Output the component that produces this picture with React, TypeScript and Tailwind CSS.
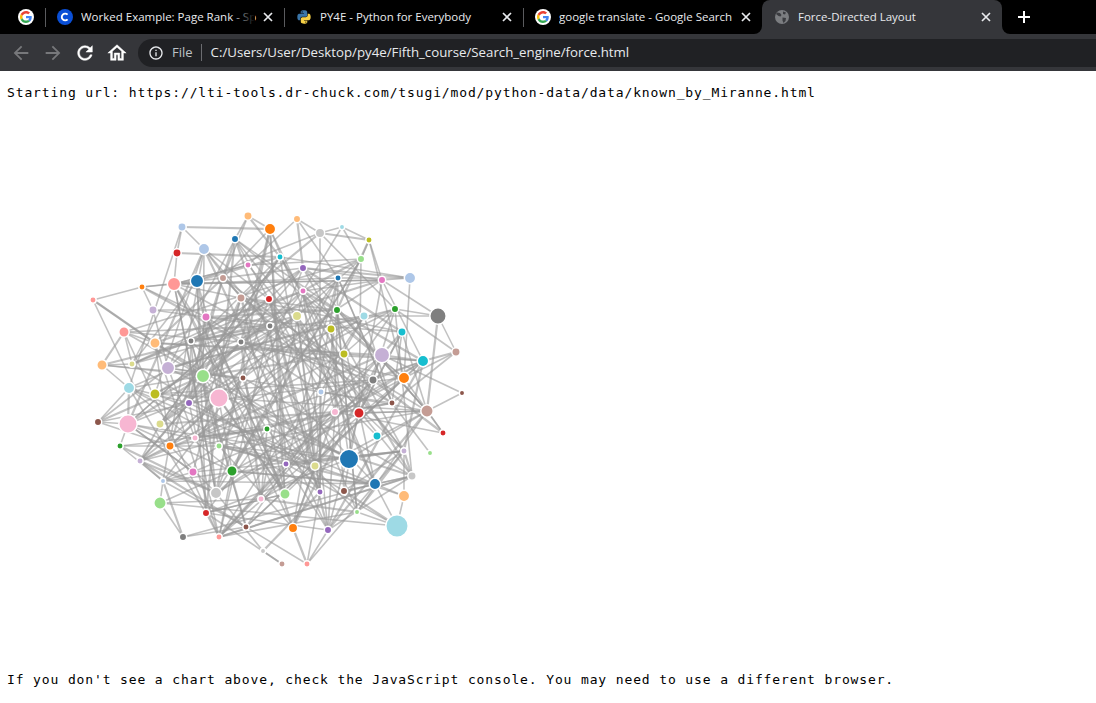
import { ReactNode } from "react";

type Node = [number, number, number, string];

const nodes: Node[] = [
  [248, 216, 3.5, "#ffbb78"], [270, 229, 5, "#ff7f0e"], [182, 227, 3.5, "#aec7e8"], [235, 239, 3, "#1f77b4"],
  [204, 249, 5, "#aec7e8"], [177, 253, 3.5, "#d62728"], [280, 257, 2.5, "#17becf"], [248, 265, 2.5, "#e377c2"],
  [223, 278, 3, "#c49c94"], [197, 281, 6, "#1f77b4"], [174, 284, 6, "#ff9896"], [142, 287, 2.5, "#ff7f0e"],
  [93, 300, 2.5, "#ff9896"], [241, 298, 3.5, "#c49c94"], [269, 299, 3, "#d62728"], [153, 310, 3.5, "#c5b0d5"],
  [206, 317, 3.5, "#e377c2"], [124, 332, 4.5, "#ff9896"], [155, 343, 4.5, "#ffbb78"], [191, 341, 2.5, "#7f7f7f"],
  [241, 342, 2.5, "#7f7f7f"], [270, 326, 2.5, "#7f7f7f"], [102, 365, 4.5, "#ffbb78"], [132, 364, 2.5, "#dbdb8d"],
  [168, 368, 6, "#c5b0d5"], [203, 376, 6, "#98df8a"], [243, 378, 2.5, "#8c564b"], [129, 388, 5, "#9edae5"],
  [155, 394, 4.5, "#bcbd22"], [297, 219, 3, "#ffbb78"], [320, 233, 4, "#c7c7c7"], [342, 227, 2, "#9edae5"],
  [369, 240, 2.5, "#bcbd22"], [361, 259, 3, "#98df8a"], [303, 268, 3, "#9467bd"], [338, 278, 2.5, "#1f77b4"],
  [382, 280, 3, "#e377c2"], [410, 278, 5, "#aec7e8"], [303, 291, 2.5, "#e377c2"], [395, 309, 3, "#2ca02c"],
  [337, 310, 3, "#2ca02c"], [297, 316, 4, "#dbdb8d"], [364, 316, 3.5, "#9edae5"], [438, 316, 7.5, "#7f7f7f"],
  [402, 332, 3.5, "#17becf"], [331, 329, 3.5, "#bcbd22"], [344, 354, 3.5, "#bcbd22"], [382, 355, 7, "#c5b0d5"],
  [423, 361, 5, "#17becf"], [456, 352, 3.5, "#c49c94"], [373, 380, 3.5, "#7f7f7f"], [404, 378, 5, "#ff7f0e"],
  [321, 392, 2.5, "#aec7e8"], [462, 393, 2, "#8c564b"], [189, 403, 3, "#9467bd"], [219, 398, 8.5, "#f7b6d2"],
  [98, 422, 3, "#8c564b"], [128, 424, 8.5, "#f7b6d2"], [160, 424, 3.5, "#dbdb8d"], [267, 429, 2.5, "#2ca02c"],
  [195, 438, 2.5, "#f7b6d2"], [120, 446, 2.5, "#2ca02c"], [170, 446, 3.5, "#ff7f0e"], [219, 446, 2.5, "#98df8a"],
  [140, 461, 2.5, "#c5b0d5"], [193, 472, 3.5, "#e377c2"], [232, 471, 4.5, "#2ca02c"], [163, 481, 2, "#aec7e8"],
  [216, 493, 5, "#c7c7c7"], [160, 503, 5.5, "#98df8a"], [261, 499, 2.5, "#f7b6d2"], [206, 513, 3, "#d62728"],
  [246, 527, 2.5, "#8c564b"], [183, 537, 3, "#7f7f7f"], [219, 537, 2.5, "#ff9896"], [263, 551, 2, "#c7c7c7"],
  [392, 403, 2.5, "#8c564b"], [335, 412, 3, "#f7b6d2"], [359, 413, 4.5, "#d62728"], [427, 411, 5.5, "#c49c94"],
  [443, 433, 2.5, "#d62728"], [377, 436, 3.5, "#17becf"], [404, 451, 2.5, "#c5b0d5"], [430, 453, 2, "#98df8a"],
  [349, 459, 9, "#1f77b4"], [286, 464, 2.5, "#9467bd"], [315, 466, 3.5, "#dbdb8d"], [412, 476, 3.5, "#c7c7c7"],
  [375, 484, 5, "#1f77b4"], [344, 491, 3, "#8c564b"], [320, 492, 2.5, "#9467bd"], [285, 494, 4.5, "#98df8a"],
  [404, 496, 5, "#ffbb78"], [357, 512, 2, "#98df8a"], [397, 526, 10.5, "#9edae5"], [293, 528, 4, "#ff7f0e"],
  [328, 530, 3, "#9467bd"], [282, 564, 2.5, "#c49c94"], [307, 564, 2.5, "#ff9896"],
];

// the edges that can be read on the outside of the graph
const outerEdges: number[][] = [
  [182, 227, 270, 229], [182, 227, 204, 249], [182, 227, 177, 253], [182, 227, 129, 388], [177, 253, 174, 284],
  [177, 253, 280, 257], [174, 284, 142, 287], [142, 287, 93, 300], [93, 300, 155, 343], [93, 300, 137, 392],
  [93, 300, 203, 376], [142, 287, 197, 281], [174, 284, 248, 265], [142, 287, 153, 310], [153, 310, 168, 368],
  [142, 287, 241, 342], [142, 287, 206, 317], [248, 216, 235, 239], [248, 216, 270, 229], [248, 216, 223, 278],
  [248, 216, 280, 257], [124, 332, 155, 343], [124, 332, 132, 364], [124, 332, 241, 342], [124, 332, 270, 326],
  [102, 365, 124, 332], [102, 365, 132, 364], [102, 365, 129, 388], [102, 365, 243, 378], [102, 365, 203, 376],
  [102, 365, 297, 316], [204, 249, 203, 376], [204, 249, 241, 298], [197, 281, 320, 233], [297, 219, 320, 233],
  [297, 219, 303, 268], [297, 219, 248, 265], [297, 219, 338, 278], [342, 227, 320, 233], [342, 227, 369, 240],
  [320, 233, 369, 240], [342, 227, 361, 259], [342, 227, 303, 291], [369, 240, 382, 280], [369, 240, 404, 378],
  [369, 240, 337, 310], [369, 240, 361, 259], [361, 259, 297, 316], [410, 278, 404, 378], [410, 278, 338, 278],
  [410, 278, 303, 268], [410, 278, 382, 280], [410, 278, 280, 257], [438, 316, 395, 309], [438, 316, 456, 352],
  [438, 316, 427, 411], [438, 316, 364, 316], [438, 316, 382, 280], [395, 309, 456, 352], [395, 309, 344, 354],
  [456, 352, 423, 361], [456, 352, 404, 378], [456, 352, 392, 403], [462, 393, 382, 355], [423, 361, 344, 354],
  [423, 361, 382, 355], [423, 361, 373, 380], [427, 411, 462, 393], [427, 411, 443, 433], [443, 433, 404, 378],
  [443, 433, 373, 380], [443, 433, 335, 412], [430, 453, 392, 403], [427, 411, 321, 392], [427, 411, 359, 413],
  [404, 451, 412, 476], [404, 496, 404, 451], [404, 496, 397, 526], [404, 496, 375, 484], [404, 496, 315, 466],
  [397, 526, 344, 491], [397, 526, 160, 503], [397, 526, 357, 512], [397, 526, 286, 464], [397, 526, 375, 484],
  [412, 476, 267, 429], [404, 451, 349, 459], [307, 564, 328, 530], [307, 564, 404, 451], [307, 564, 320, 492],
  [307, 564, 293, 528], [307, 564, 246, 527], [282, 564, 263, 551], [282, 564, 206, 513], [263, 551, 216, 493],
  [263, 551, 320, 492], [328, 530, 412, 476], [328, 530, 286, 464], [183, 537, 246, 527], [183, 537, 160, 503],
  [183, 537, 163, 481], [183, 537, 375, 484], [219, 537, 206, 513], [219, 537, 232, 471], [219, 537, 357, 512],
  [246, 527, 140, 461], [160, 503, 163, 481], [160, 503, 261, 499], [160, 503, 232, 471], [163, 481, 120, 446],
  [140, 461, 163, 481], [163, 481, 193, 472], [163, 481, 246, 527], [98, 422, 128, 424], [98, 422, 129, 388],
  [98, 422, 203, 376], [98, 422, 219, 398], [98, 422, 170, 446], [98, 422, 168, 368], [120, 446, 128, 424],
  [120, 446, 216, 493], [120, 446, 219, 446], [120, 446, 267, 429], [128, 424, 349, 459], [128, 424, 243, 378],
  [128, 424, 129, 388], [140, 461, 160, 424], [140, 461, 219, 398], [206, 513, 349, 459], [206, 513, 285, 494],
];

// fills the middle of the graph, seeded so that the picture does not change between runs
function innerEdges(count: number) {
  const inner = nodes.filter((n) => Math.hypot(n[0] - 278, n[1] - 385) < 165);
  const out: number[][] = [];
  let seed = 1237;
  const next = () => {
    seed = (seed * 16807) % 2147483647;
    return seed / 2147483647;
  };
  while (out.length < count) {
    const a = inner[Math.floor(next() * inner.length)];
    const b = inner[Math.floor(next() * inner.length)];
    const d = Math.hypot(a[0] - b[0], a[1] - b[1]);
    if (d < 60 || d > 280) continue;
    out.push([a[0], a[1], b[0], b[1]]);
  }
  return out;
}

const edges = [...outerEdges, ...innerEdges(270)];

function ForceChart() {
  return (
    <svg className="block" width="600" height="570" viewBox="0 101 600 570">
      <g stroke="#999999" strokeOpacity="0.6">
        {edges.map((e, i) => (
          <line key={i} x1={e[0]} y1={e[1]} x2={e[2]} y2={e[3]} strokeWidth={i % 5 === 0 ? 2.2 : 1.6} />
        ))}
      </g>
      <g stroke="#ffffff" strokeWidth="1.5">
        {nodes.map((n, i) => (
          <circle key={i} cx={n[0]} cy={n[1]} r={n[2] + 0.7} fill={n[3]} />
        ))}
      </g>
    </svg>
  );
}

function GoogleIcon() {
  return (
    <span className="flex h-4 w-4 flex-none items-center justify-center rounded-full bg-white">
      <svg width="12" height="12" viewBox="0 0 48 48">
        <path fill="#EA4335" d="M24 9.5c3.54 0 6.71 1.22 9.21 3.6l6.85-6.85C35.9 2.38 30.47 0 24 0 14.62 0 6.51 5.38 2.56 13.22l7.98 6.19C12.43 13.72 17.74 9.5 24 9.5z" />
        <path fill="#4285F4" d="M46.98 24.55c0-1.57-.15-3.09-.38-4.55H24v9.02h12.94c-.58 2.96-2.26 5.48-4.78 7.18l7.73 6c4.51-4.18 7.09-10.36 7.09-17.65z" />
        <path fill="#FBBC05" d="M10.53 28.59c-.48-1.45-.76-2.99-.76-4.59s.27-3.14.76-4.59l-7.98-6.19C.92 16.46 0 20.12 0 24c0 3.88.92 7.54 2.56 10.78l7.97-6.19z" />
        <path fill="#34A853" d="M24 48c6.48 0 11.93-2.13 15.89-5.81l-7.73-6c-2.15 1.45-4.92 2.3-8.16 2.3-6.26 0-11.57-4.22-13.47-9.91l-7.98 6.19C6.51 42.62 14.62 48 24 48z" />
      </svg>
    </span>
  );
}

function CourseraIcon() {
  return (
    <span className="flex h-4 w-4 flex-none items-center justify-center rounded-full bg-[#0a4fd6]">
      <svg width="10" height="10" viewBox="0 0 10 10">
        <path d="M7.6 2.6A3.4 3.4 0 1 0 7.6 7.4" fill="none" stroke="#ffffff" strokeWidth="1.9" />
      </svg>
    </span>
  );
}

function PythonIcon() {
  const d = "M11.9 2C6.8 2 7.1 4.2 7.1 4.2v2.3h4.9v.7H5.2S2 6.8 2 12s2.8 5 2.8 5h1.7v-2.4s-.1-2.8 2.8-2.8h4.8s2.7 0 2.7-2.6V4.7S17.2 2 11.9 2zM9.2 3.5a.9.9 0 1 1 0 1.8.9.9 0 0 1 0-1.8z";
  return (
    <svg className="flex-none" width="16" height="16" viewBox="0 0 24 24">
      <path fill="#3a75a8" d={d} />
      <path fill="#f5cf45" d={d} transform="rotate(180 12 12)" />
    </svg>
  );
}

function GlobeIcon() {
  return (
    <svg className="flex-none" width="16" height="16" viewBox="0 0 16 16">
      <circle cx="8" cy="8" r="7" fill="#7b7d80" />
      <path d="M3 3.5l3 .5 1.5 2-1 1.5-2-.5L2 5zM9 2.5l3 1-1 2-2-.5zM8.5 8.5l3.5.5-.5 3-2 2-1-2.5z" fill="#3b3c40" />
    </svg>
  );
}

function CloseIcon() {
  return (
    <svg className="flex-none" width="10" height="10" viewBox="0 0 10 10">
      <path d="M1 1l8 8M9 1l-8 8" stroke="#e8eaed" strokeWidth="1.7" />
    </svg>
  );
}

function Tab({ icon, title, fade, active }: { icon: ReactNode; title: string; fade?: boolean; active?: boolean }) {
  return (
    <div className={`relative flex h-[34px] items-center pl-3 pr-[11px] ${active ? "w-[240px] rounded-t-lg bg-[#35363a]" : "w-[239px]"}`}>
      {!active && <span className="absolute left-0 top-2 h-[19px] w-px bg-[#5a5b5e]" />}
      {icon}
      <span className="relative ml-2 flex-1 overflow-hidden whitespace-nowrap text-[11.5px] text-[#e8eaed]">
        <span className="inline-block">{title}</span>
        {fade && <span className="absolute left-[150px] top-0 h-full w-6 bg-gradient-to-r from-transparent to-black" />}
      </span>
      <CloseIcon />
      {active && (
        <>
          <span className="absolute -left-2 bottom-0 h-2 w-2 bg-[#35363a]">
            <span className="block h-2 w-2 rounded-br-lg bg-black" />
          </span>
          <span className="absolute -right-2 bottom-0 h-2 w-2 bg-[#35363a]">
            <span className="block h-2 w-2 rounded-bl-lg bg-black" />
          </span>
        </>
      )}
    </div>
  );
}

function ToolIcon({ d, color, bold }: { d: string; color: string; bold?: boolean }) {
  return (
    <svg className="flex-none" width="22" height="22" viewBox="0 0 24 24" fill={color} stroke={bold ? color : "none"} strokeWidth={bold ? 0.5 : 0}>
      <path d={d} />
    </svg>
  );
}

const arrowLeft = "M20 11H7.83l5.59-5.59L12 4l-8 8 8 8 1.41-1.41L7.83 13H20v-2z";
const arrowRight = "M4 11h12.17l-5.59-5.59L12 4l8 8-8 8-1.41-1.41L16.17 13H4v-2z";
const reload = "M17.65 6.35A7.958 7.958 0 0 0 12 4c-4.42 0-7.99 3.58-7.99 8s3.57 8 7.99 8c3.73 0 6.84-2.55 7.73-6h-2.08A5.99 5.99 0 0 1 12 18c-3.31 0-6-2.69-6-6s2.69-6 6-6c1.66 0 3.14.69 4.22 1.78L13 11h7V4l-2.35 2.35z";
const home = "M12 5.69l5 4.5V18h-2v-6H9v6H7v-7.81l5-4.5M12 3L2 12h3v8h6v-6h2v6h6v-8h3L12 3z";
const info = "M11 7h2v2h-2zm0 4h2v6h-2zm1-9C6.48 2 2 6.48 2 12s4.48 10 10 10 10-4.48 10-10S17.52 2 12 2zm0 18c-4.41 0-8-3.59-8-8s3.59-8 8-8 8 3.59 8 8-3.59 8-8 8z";

export default function App() {
  return (
    <div className="flex h-[703px] w-[1096px] flex-col overflow-hidden bg-white font-['Open_Sans',sans-serif]">
      <div className="flex h-[34px] flex-none items-center bg-black">
        <div className="flex w-[45px] flex-none justify-center pl-[7px]">
          <GoogleIcon />
        </div>
        <Tab icon={<CourseraIcon />} title="Worked Example: Page Rank - Sp" fade />
        <Tab icon={<PythonIcon />} title="PY4E - Python for Everybody" />
        <Tab icon={<GoogleIcon />} title="google translate - Google Search" />
        <Tab icon={<GlobeIcon />} title="Force-Directed Layout" active />
        <svg className="ml-4 flex-none" width="12" height="12" viewBox="0 0 12 12">
          <path d="M6 0v12M0 6h12" stroke="#ffffff" strokeWidth="2" />
        </svg>
      </div>

      <div className="flex h-[37px] flex-none items-center bg-[#35363a] pl-[10px]">
        <ToolIcon d={arrowLeft} color="#77787b" />
        <span className="ml-[10px]"><ToolIcon d={arrowRight} color="#77787b" /></span>
        <span className="ml-[10px]"><ToolIcon d={reload} color="#ffffff" bold /></span>
        <span className="ml-[10px]"><ToolIcon d={home} color="#ffffff" bold /></span>
        <div className="ml-[10px] flex h-7 flex-1 items-center rounded-l-full bg-[#202124] pl-[10px]">
          <svg className="flex-none" width="16" height="16" viewBox="0 0 24 24" fill="#e8eaed">
            <path d={info} />
          </svg>
          <span className="ml-[8px] text-[13px] text-[#bdc1c6]">File</span>
          <span className="ml-2 mr-[9px] h-[17px] w-px bg-[#6b6c70]" />
          <span className="whitespace-nowrap text-[13.25px] text-[#e8eaed]">C:/Users/User/Desktop/py4e/Fifth_course/Search_engine/force.html</span>
        </div>
      </div>

      <main className="flex-1 font-['DejaVu_Sans_Mono',monospace] text-[13px] leading-4 tracking-[0.87px] text-black">
        <p className="pl-[7px] pt-[14px]">Starting url: https://lti-tools.dr-chuck.com/tsugi/mod/python-data/data/known_by_Miranne.html</p>
        <ForceChart />
        <p className="mt-[1px] pl-[7px]">If you don't see a chart above, check the JavaScript console. You may need to use a different browser.</p>
      </main>
    </div>
  );
}
